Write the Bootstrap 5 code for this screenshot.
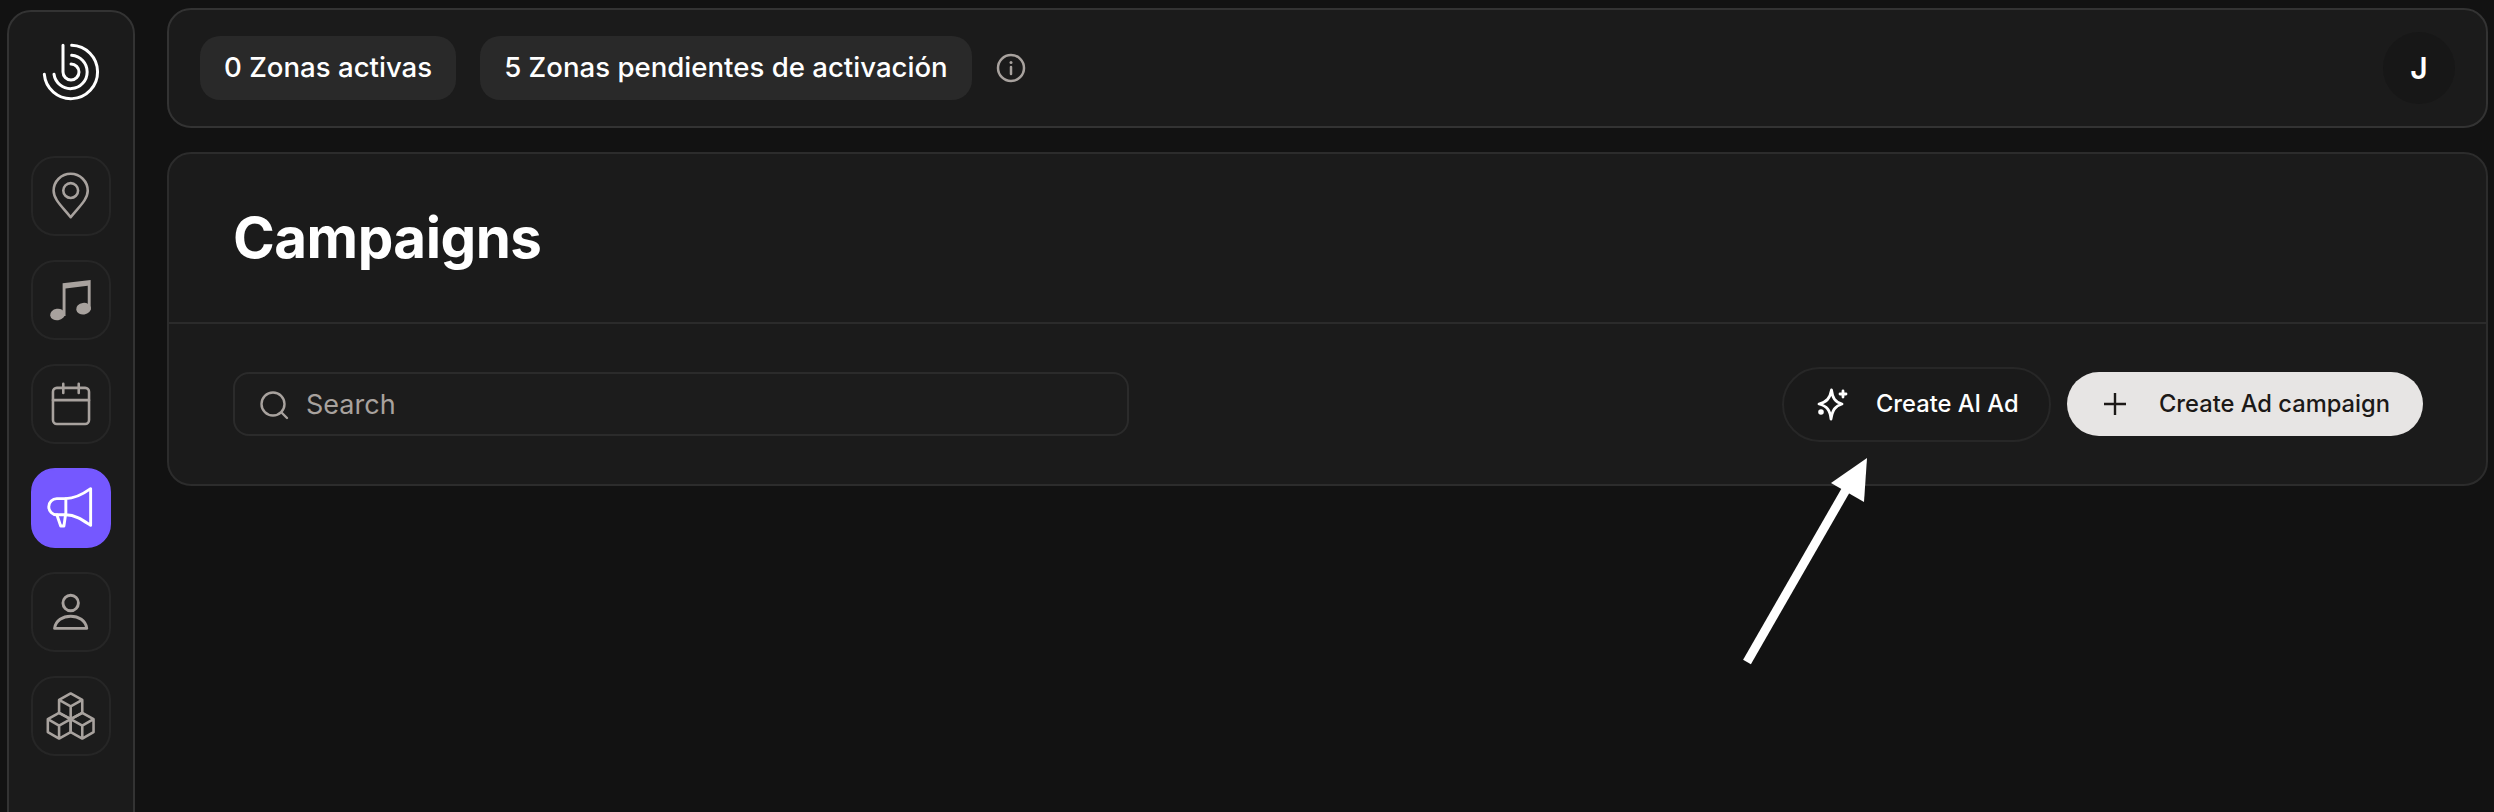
<!DOCTYPE html>
<html lang="es">
<head>
<meta charset="utf-8">
<title>Campaigns</title>
<link rel="stylesheet" href="https://cdn.jsdelivr.net/npm/bootstrap@5.3.0/dist/css/bootstrap.min.css">
<style>
html,body{height:100%}
body{background:#121212;color:#fff;font-family:"Inter","Liberation Sans",sans-serif;overflow:hidden;position:relative}
.shell{padding:8px 6px 0 7px;gap:32px;height:812px}
.side-rail{width:128px;flex:none;margin-top:2px;height:900px;background:#1b1b1b;border:2px solid #333;border-radius:24px;padding-top:30px}
.logo-box{width:60px;height:60px;margin-bottom:54px}
.rail-btn{width:80px;height:80px;border:2px solid #262626;border-radius:24px;background:#1c1c1c;color:#a8a29e}
.rail-btn svg{width:76px;height:76px;display:block}
.rail-btn.is-on{background:#7558ff;border-color:#7558ff;color:#fff}
.rail-gap{gap:24px}
.panel{background:#1b1b1b;border:2px solid #2c2c2c;border-radius:24px}
.top-panel{height:120px;padding:0 31px;border-color:#333}
.zone-pill{height:64px;background:#292929;border-radius:20px;padding:0 24px;font-size:27.600px;font-weight:500;white-space:nowrap}
.info-ico{width:30px;height:30px;color:#a8a29e}
.avatar-dot{width:72px;height:72px;border-radius:50%;background:#171717;font-size:30px;font-weight:600}
.main-panel{height:334px;margin-top:24px}
.title-zone{height:170px;border-bottom:2px solid #2b2b2b;padding-left:64px}
.page-title{font-size:56.500px;font-weight:700;margin:0;letter-spacing:-.5px}
.tool-zone{height:161px;padding:0 63px 1px 64px}
.search-box{width:896px;height:64px;border:2px solid #2b2b2b;border-radius:16px;background:#1c1c1c;padding:2px 0 0 24px;gap:17px;color:#a8a29e;font-size:27px}
.ai-btn,.new-btn{font-size:23.700px;font-weight:500;white-space:nowrap;display:flex;align-items:center}
.ai-btn{height:75px;width:269px;border:2px solid #272727;border-radius:38px;background:#1a1a1a;color:#fff;padding:0 0 0 31px;gap:27px}
.new-btn{height:64px;width:356px;border:0;border-radius:32px;background:#e7e5e4;color:#1c1917;padding:0 0 0 36px;gap:32px}
.note-arrow{position:absolute;left:1740px;top:450px;width:135px;height:220px;pointer-events:none}
</style>
</head>
<body>
<div class="d-flex shell">
  <nav class="side-rail d-flex flex-column align-items-center">
    <svg class="logo-box" viewBox="122 125 180 180" fill="none" stroke="#fff" stroke-width="9" stroke-linecap="round">
      <path d="M188 135V215A24 24 0 1 0 212 191"/>
      <path d="M214 165A50 50 0 1 1 161 222"/>
      <path d="M214 135A80 80 0 1 1 132 222"/>
    </svg>
    <div class="d-flex flex-column rail-gap">
      <a class="rail-btn d-flex align-items-center justify-content-center"><svg viewBox="2 2 236 236" fill="none" stroke="currentColor" stroke-width="8" stroke-linejoin="round"><path d="M119 186C96 156 66 132 66 104A53 53 0 0 1 172 104C172 132 142 156 119 186Z"/><circle cx="119" cy="103" r="23"/></svg></a>
      <a class="rail-btn d-flex align-items-center justify-content-center"><svg viewBox="2 2 236 236" fill="currentColor" stroke="none"><path d="M94 68L181 58V150H172V76L103 84V170H94Z"/><ellipse cx="78" cy="165" rx="23" ry="18" transform="rotate(-8 78 165)"/><ellipse cx="159" cy="147" rx="23" ry="18" transform="rotate(-8 159 147)"/></svg></a>
      <a class="rail-btn d-flex align-items-center justify-content-center"><svg viewBox="2 2 236 236" fill="none" stroke="currentColor" stroke-width="8" stroke-linecap="round" stroke-linejoin="round"><rect x="64" y="70" width="112" height="112" rx="12"/><path d="M64 108H176M96 57V86M144 57V86"/></svg></a>
      <a class="rail-btn is-on d-flex align-items-center justify-content-center"><svg viewBox="2 2 236 236" fill="none" stroke="currentColor" stroke-width="9" stroke-linecap="round" stroke-linejoin="round"><path d="M104 91C135 91 160 75 181 60V174C160 160 135 141 104 141Z"/><path d="M104 91H76A25 25 0 0 0 76 141H104"/><path d="M76 141L88 176H98L103 141"/></svg></a>
      <a class="rail-btn d-flex align-items-center justify-content-center"><svg viewBox="2 2 236 236" fill="none" stroke="currentColor" stroke-width="9" stroke-linejoin="round"><circle cx="119" cy="92" r="24"/><path d="M69 171C72 146 95 133 119 133C143 133 166 146 169 171Z"/></svg></a>
      <a class="rail-btn d-flex align-items-center justify-content-center"><svg viewBox="2 2 236 236" fill="none" stroke="currentColor" stroke-width="8" stroke-linejoin="round"><path d="M119 50L155 70V110L119 130L83 110V70ZM83 70L119 90L155 70M119 90V130"/><path d="M83 110L119 130V170L83 190L48 170V130ZM48 130L83 150L119 130M83 150V190"/><path d="M155 110L190 130V170L155 190L119 170V130ZM119 130L155 150L190 130M155 150V190"/></svg></a>
    </div>
  </nav>
  <main class="flex-grow-1">
    <header class="panel top-panel d-flex align-items-center">
      <span class="zone-pill d-flex align-items-center me-4">0 Zonas activas</span>
      <span class="zone-pill d-flex align-items-center">5 Zonas pendientes de activación</span>
      <svg class="info-ico ms-4" viewBox="0 0 30 30" fill="none" stroke="currentColor" stroke-width="2.500"><circle cx="15" cy="15" r="13"/><path d="M15 14V21" stroke-linecap="round"/><circle cx="15" cy="9.500" r="1.500" fill="currentColor" stroke="none"/></svg>
      <span class="avatar-dot d-flex align-items-center justify-content-center ms-auto">J</span>
    </header>
    <section class="panel main-panel">
      <div class="title-zone d-flex align-items-center"><h1 class="page-title">Campaigns</h1></div>
      <div class="tool-zone d-flex align-items-center justify-content-between">
        <label class="search-box d-flex align-items-center">
          <svg width="30" height="30" viewBox="0 0 30 30" fill="none" stroke="currentColor" stroke-width="2.400" stroke-linecap="round"><circle cx="14" cy="14" r="11.500"/><path d="M22.500 22.500L28 28"/></svg>
          <span>Search</span>
        </label>
        <div class="d-flex align-items-center gap-3">
          <button type="button" class="ai-btn"><svg width="34" height="34" viewBox="0 0 34 34" fill="none" stroke="currentColor" stroke-width="2.800" stroke-linejoin="round" stroke-linecap="round"><path d="M16.500 3C17.500 11 20 15 27 17C20 19 17.500 23 16 32C15 23 12 19 4 17C12 15 15 11 16.500 3Z"/><path d="M28 4V10M25 7H31"/><circle cx="6" cy="25" r="1.400" fill="currentColor"/></svg><span>Create AI Ad</span></button>
          <button type="button" class="new-btn"><svg width="24" height="24" viewBox="0 0 24 24" stroke="currentColor" stroke-width="2.400"><path d="M12 1V23M1 12H23"/></svg><span>Create Ad campaign</span></button>
        </div>
      </div>
    </section>
  </main>
</div>
<svg class="note-arrow" viewBox="1740 450 135 220" fill="#fff"><path d="M1747 662L1847 488" stroke="#fff" stroke-width="9"/><path d="M1867 458L1864 502L1831 483Z"/></svg>
<script src="https://cdn.jsdelivr.net/npm/bootstrap@5.3.0/dist/js/bootstrap.bundle.min.js"></script>
</body>
</html>
